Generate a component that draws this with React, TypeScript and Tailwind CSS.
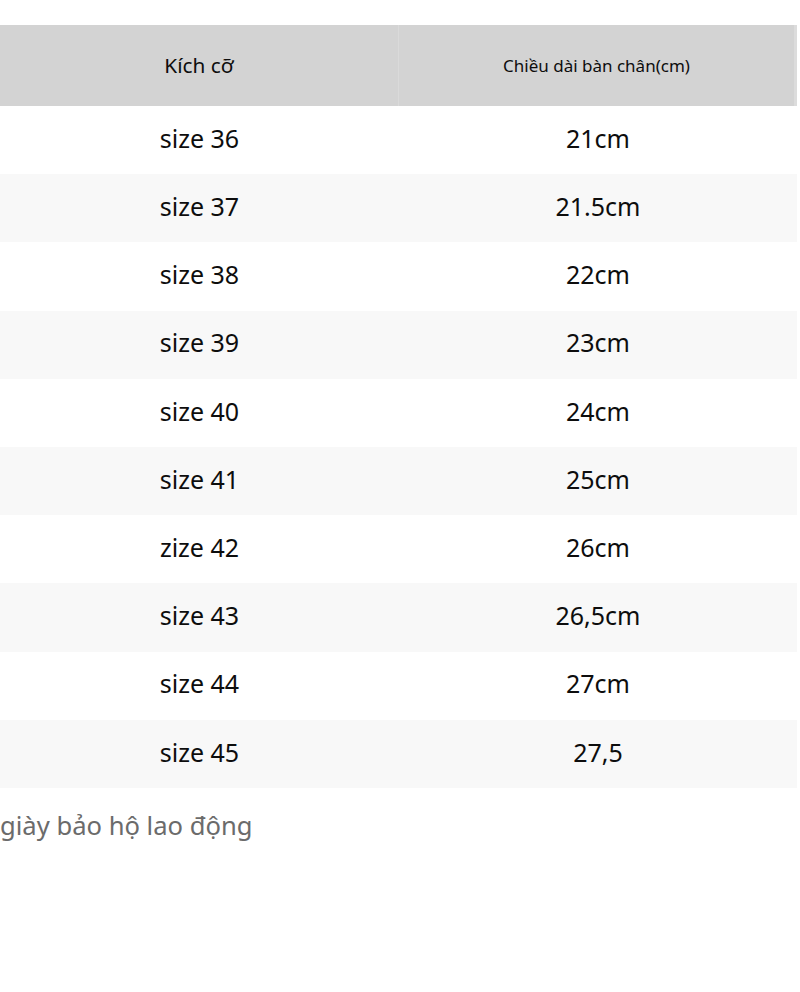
const rows: [string, string][] = [
  ["size 36", "21cm"],
  ["size 37", "21.5cm"],
  ["size 38", "22cm"],
  ["size 39", "23cm"],
  ["size 40", "24cm"],
  ["size 41", "25cm"],
  ["zize 42", "26cm"],
  ["size 43", "26,5cm"],
  ["size 44", "27cm"],
  ["size 45", "27,5"],
];

export default function App() {
  return (
    <div
      className="min-h-[992px] bg-white pt-[25px] text-[#0d0d0d]"
      style={{ fontFamily: '"Noto Sans", "Open Sans", sans-serif' }}
    >
      <div className="w-[797px]">
        <div className="grid h-[81px] grid-cols-[399px_1fr] bg-[#d3d3d3]">
          <div className="flex items-center justify-center border-r border-[#dadada] text-[20.8px]">
            Kích cỡ
          </div>
          <div className="flex items-center justify-center border-r-[3px] border-[#dcdcdc] text-[17px]">
            Chiều dài bàn chân(cm)
          </div>
        </div>
        {rows.map(([size, len], i) => (
          <div
            key={size}
            className={`grid h-[68.2px] grid-cols-[399px_1fr] pb-[3px] text-[25px] ${
              i % 2 === 1 ? "bg-[#f8f8f8]" : "bg-white"
            }`}
          >
            <div className="flex items-center justify-center">{size}</div>
            <div className="flex items-center justify-center">{len}</div>
          </div>
        ))}
      </div>
      <p className="mt-[22px] text-[25.6px] leading-[32px] text-[#6b6b6b]">
        giày bảo hộ lao động
      </p>
    </div>
  );
}
